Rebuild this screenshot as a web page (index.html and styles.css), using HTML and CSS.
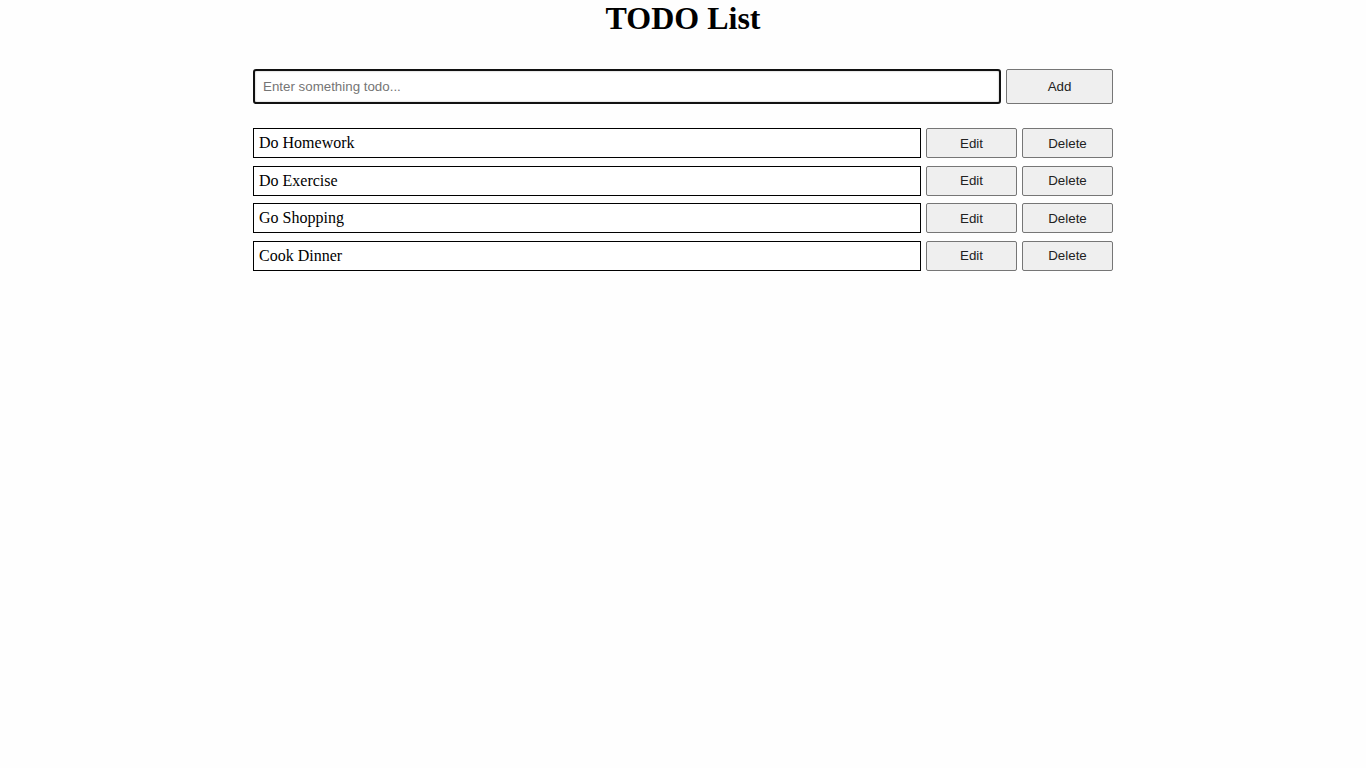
FILE: index.html
```html
<!DOCTYPE html>
<html lang="en">
<head>
<meta charset="utf-8">
<title>TODO List</title>
<link rel="stylesheet" href="styles.css">
</head>
<body>
<div class="app">
  <h1 class="title">TODO List</h1>
  <form class="add-row">
    <input class="add-input" type="text" placeholder="Enter something todo...">
    <button class="btn add-btn" type="button">Add</button>
  </form>
  <ul class="todo-list">
    <li class="todo-row"><div class="todo-text">Do Homework</div><button class="btn small" type="button">Edit</button><button class="btn small" type="button">Delete</button></li>
    <li class="todo-row"><div class="todo-text">Do Exercise</div><button class="btn small" type="button">Edit</button><button class="btn small" type="button">Delete</button></li>
    <li class="todo-row"><div class="todo-text">Go Shopping</div><button class="btn small" type="button">Edit</button><button class="btn small" type="button">Delete</button></li>
    <li class="todo-row"><div class="todo-text">Cook Dinner</div><button class="btn small" type="button">Edit</button><button class="btn small" type="button">Delete</button></li>
  </ul>
</div>
</body>
</html>
```
FILE: styles.css
```css
html, body {
  margin: 0;
  padding: 0;
  background: #fefefe;
}
body {
  font-family: "Liberation Serif", "Times New Roman", serif;
  color: #000;
}
.app {
  width: 860px;
  margin: 0 auto;
}
.title {
  margin: 0 0 32px;
  text-align: center;
  font-size: 32px;
  font-weight: bold;
  line-height: 37px;
}
.add-row {
  display: flex;
  gap: 5px;
  margin: 0 0 24px;
}
.add-input {
  flex: 1;
  height: 35px;
  box-sizing: border-box;
  border: 2px solid #111;
  border-radius: 3px;
  box-shadow: inset 0 0 2px rgba(0,0,0,0.35);
  padding: 0 8px;
  font-family: "Liberation Sans", Arial, sans-serif;
  font-size: 13.33px;
  outline: none;
  background: #fff;
}
.add-input::placeholder {
  color: #757575;
}
.btn {
  box-sizing: border-box;
  background: #efefef;
  border: 1px solid #767676;
  border-radius: 2px;
  font-family: "Liberation Sans", Arial, sans-serif;
  font-size: 13.33px;
  color: #222;
  padding: 0;
}
.add-btn {
  width: 107px;
  height: 35px;
}
.todo-list {
  list-style: none;
  margin: 0;
  padding: 0;
  display: flex;
  flex-direction: column;
  gap: 7.5px;
}
.todo-row {
  display: flex;
  gap: 5px;
  height: 30px;
}
.todo-text {
  flex: 1;
  box-sizing: border-box;
  border: 1px solid #000;
  padding: 0 5px;
  font-size: 16px;
  line-height: 28px;
  background: #fff;
}
.btn.small {
  width: 91px;
  height: 30px;
}
```
